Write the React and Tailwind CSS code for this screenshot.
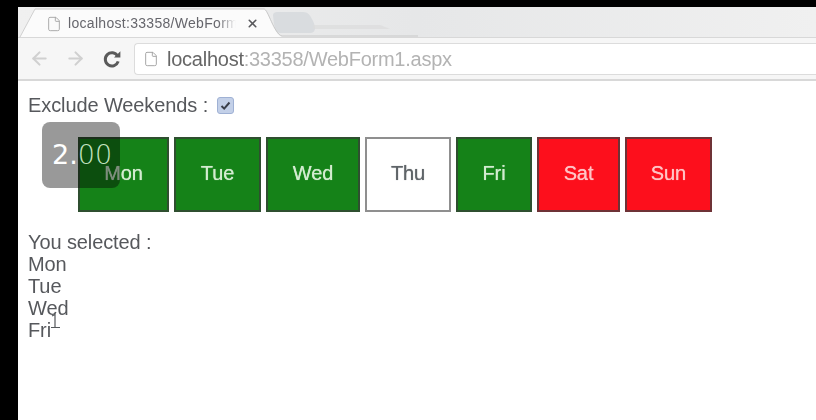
import React from "react";
import { ArrowLeft, ArrowRight, File, X } from "lucide-react";

const green = "bg-[#158218] border-[#2f4f30] text-[#d3ecd0]";
const red = "bg-[#fd0f1c] border-[#6e3236] text-[#ffc4c6]";
const days = [
  { t: "Mon", w: "w-[91px]", c: green },
  { t: "Tue", w: "w-[87px]", c: green },
  { t: "Wed", w: "w-[94px]", c: green },
  { t: "Thu", w: "w-[86px]", c: "bg-white border-[#8f8f8f] text-[#5f6468]" },
  { t: "Fri", w: "w-[76px]", c: green },
  { t: "Sat", w: "w-[83px]", c: red },
  { t: "Sun", w: "w-[87px]", c: red },
];

const font = { fontFamily: '"Liberation Sans", Arial, sans-serif' };

function Reload() {
  return (
    <svg width="20" height="20" viewBox="0 0 20 20" fill="none">
      <path d="M15.6 7A6.6 6.6 0 1 0 16.2 12.4" stroke="#5a5a5a" strokeWidth="3" />
      <path d="M12 8.6H18.4V2.2Z" fill="#5a5a5a" />
    </svg>
  );
}

export default function App() {
  return (
    <div className="relative w-[816px] h-[420px] bg-black pt-[7px] pl-[18px] overflow-hidden" style={font}>
      <div className="w-[798px] h-[413px] bg-white flex flex-col">
        <div className="relative h-[30px] bg-gradient-to-r from-[#f0f0f0] via-[#e6e7e8] to-[#f0f0f0] blur-[0.6px]">
          <svg className="absolute left-0 top-0" width="400" height="30" viewBox="0 0 400 30" fill="none">
            <path d="M255 8C255 6 257 5 259 5H285C290 5 292 8 295 14C298 20 298 26 292 26H262C258 26 256 22 255 8Z" fill="#d9dcdf" />
            <path d="M295 22H372L362 18H295Z" fill="#dcdcdc" opacity="0.7" />
            <path d="M2 30L17 2H246C250 2 256 28 264 30Z" fill="#fbfbfb" />
            <path d="M2 30L17 2" stroke="#d0d0d0" />
            <path d="M17 2H246C250 2 256 27 264 29H400" stroke="#c9c9c9" />
          </svg>
          <div className="relative flex items-center h-[30px] pl-[28px] pt-[3px]">
            <File size={16} strokeWidth={1.4} className="text-[#a6a6a6]" />
            <span className="relative ml-[6px] w-[168px] overflow-hidden whitespace-nowrap text-[14px] tracking-[0.3px] text-[#66666c]">
              localhost:33358/WebForm
              <span className="absolute right-0 top-0 bottom-0 w-[18px] bg-gradient-to-r from-transparent to-[#fbfbfb]"></span>
            </span>
            <X size={13} strokeWidth={3} className="ml-[10px] text-[#58585c]" />
          </div>
        </div>
        <div className="h-[44px] bg-[#f6f6f6] border-t border-b-2 border-[#d8d8d8] flex items-center pl-[11px] blur-[0.6px]">
          <ArrowLeft size={21} strokeWidth={2.4} className="text-[#d0d0d0]" />
          <ArrowRight size={21} strokeWidth={2.4} className="ml-[15px] text-[#d0d0d0]" />
          <div className="ml-[16px]"><Reload /></div>
          <div className="ml-[12px] flex-1 h-[32px] bg-white border-y border-l border-[#dcdcdc] rounded-l-sm flex items-center pl-[8px]">
            <File size={16} strokeWidth={1.4} className="text-[#a0a0a0]" />
            <span className="ml-[8px] text-[20px] tracking-[-0.25px] text-[#666]">localhost</span>
            <span className="text-[20px] tracking-[-0.25px] text-[#b3b3b3]">:33358/WebForm1.aspx</span>
          </div>
        </div>
        <div className="flex-1 pl-[10px] text-[#56585c] text-[20px] leading-[22px] tracking-[-0.1px] blur-[0.5px]">
          <div className="flex items-center h-[24px] mt-[12px]">
            <span>Exclude Weekends :</span>
            <span className="ml-[9px] w-[17px] h-[17px] rounded-[3px] bg-[#c3d0e8] border border-[#9fb1d4] flex items-center justify-center">
              <svg width="11" height="11" viewBox="0 0 11 11" fill="none">
                <path d="M1.5 6L4.2 8.6L9.5 2.5" stroke="#3a3f4a" strokeWidth="2" />
              </svg>
            </span>
          </div>
          <div className="flex gap-[5px] ml-[50px] mt-[20px]">
            {days.map((d) => (
              <div key={d.t} className={`${d.w} h-[75px] border-2 pb-[3px] flex items-center justify-center [text-shadow:0_0_0.8px_currentColor] ${d.c}`}>
                {d.t}
              </div>
            ))}
          </div>
          <div className="mt-[19px]">
            <div>You selected :</div>
            <div>Mon</div>
            <div>Tue</div>
            <div>Wed</div>
            <div>Fri</div>
          </div>
        </div>
      </div>
      <svg className="absolute left-[50px] top-[313px]" width="12" height="16" viewBox="0 0 12 16" fill="none">
        <path d="M2 3L5 1.5V14M1 14.5H10" stroke="#55585c" strokeWidth="1.2" />
      </svg>
      <div className="absolute left-[42px] top-[122px] w-[78px] h-[66px] rounded-[8px] bg-black/40 flex items-center pl-[10px] text-[27px]" style={{ fontFamily: '"DejaVu Sans", sans-serif' }}>
        <span className="text-white">2.</span>
        <span className="text-[#c4e4c0] font-extralight">00</span>
      </div>
    </div>
  );
}
